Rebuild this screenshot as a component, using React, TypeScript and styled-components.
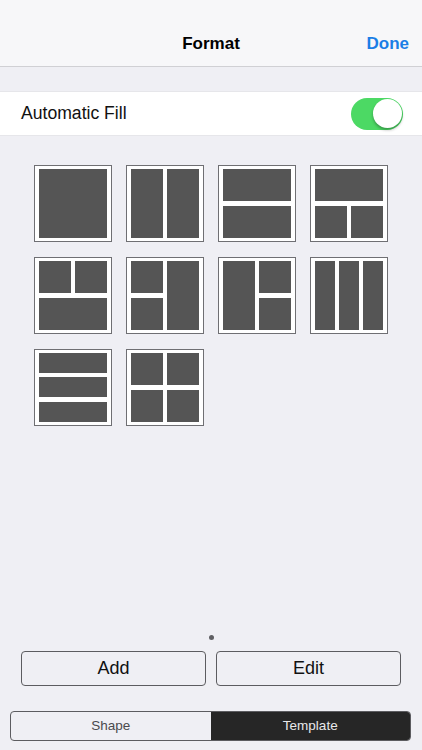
import React from "react";
import styled, { createGlobalStyle } from "styled-components";

const GlobalStyle = createGlobalStyle`
  html, body {
    margin: 0;
    padding: 0;
    background: #efeff4;
  }
  body {
    font-family: "Liberation Sans", Arial, sans-serif;
  }
`;

const Page = styled.div`
  display: flex;
  flex-direction: column;
  width: 422px;
  height: 750px;
  overflow: hidden;
  background: #efeff4;
`;

const NavBar = styled.header`
  display: flex;
  align-items: flex-end;
  justify-content: center;
  position: relative;
  box-sizing: border-box;
  height: 67px;
  padding-bottom: 12px;
  background: #f7f7f9;
  border-bottom: 1px solid #d0d0d4;
`;

const NavTitle = styled.h1`
  margin: 0;
  font-size: 17px;
  line-height: 20px;
  font-weight: 700;
  color: #000;
`;

const DoneLink = styled.a`
  position: absolute;
  right: 13px;
  bottom: 12px;
  font-size: 17px;
  line-height: 20px;
  font-weight: 700;
  color: #1a7ee6;
`;

const FillRow = styled.div`
  display: flex;
  align-items: center;
  justify-content: space-between;
  box-sizing: border-box;
  height: 45px;
  margin-top: 24px;
  padding: 0 19px 0 21px;
  background: #fff;
  border-top: 1px solid #e6e6ea;
  border-bottom: 1px solid #e6e6ea;
`;

const FillLabel = styled.span`
  font-size: 17.6px;
  color: #111;
`;

const Toggle = styled.div`
  position: relative;
  width: 52px;
  height: 32px;
  border-radius: 16px;
  background: #4cd964;
`;

const Knob = styled.div`
  position: absolute;
  top: 1.5px;
  right: 1.5px;
  width: 29px;
  height: 29px;
  border-radius: 50%;
  background: #fff;
  box-shadow: 0 2px 3px rgba(0, 0, 0, 0.3);
`;

const TemplateGrid = styled.div`
  display: grid;
  grid-template-columns: repeat(4, 78px);
  grid-auto-rows: 77px;
  column-gap: 14px;
  row-gap: 15px;
  padding: 29px 0 0 34px;
`;

const Tile = styled.div<{ $areas: string; $cols: number; $rows: number }>`
  display: grid;
  box-sizing: border-box;
  grid-template-areas: ${(p) => p.$areas};
  grid-template-columns: repeat(${(p) => p.$cols}, 1fr);
  grid-template-rows: repeat(${(p) => p.$rows}, 1fr);
  gap: 4.5px;
  padding: 3px 4px 3.5px;
  background: #fff;
  border: 1px solid #6f6f73;
`;

const Cell = styled.div<{ $area: string }>`
  grid-area: ${(p) => p.$area};
  background: #555;
`;

const BottomArea = styled.div`
  display: flex;
  flex-direction: column;
  margin-top: auto;
  padding-bottom: 9.5px;
`;

const PageDot = styled.div`
  align-self: center;
  width: 5px;
  height: 5px;
  margin-bottom: 11.5px;
  border-radius: 50%;
  background: #5f5f63;
`;

const ButtonRow = styled.div`
  display: flex;
  gap: 10px;
  padding: 0 21px;
`;

const ActionButton = styled.button`
  flex: 1;
  box-sizing: border-box;
  height: 34.5px;
  padding: 0;
  font-family: inherit;
  font-size: 18px;
  color: #111;
  background: transparent;
  border: 1px solid #5c5c60;
  border-radius: 4px;
`;

const Segmented = styled.div`
  display: flex;
  box-sizing: border-box;
  height: 29.5px;
  margin: 25.5px 11px 0 10px;
  overflow: hidden;
  border: 1px solid #5c5c60;
  border-radius: 4px;
`;

const Segment = styled.div<{ $active?: boolean }>`
  flex: 1;
  display: flex;
  align-items: center;
  justify-content: center;
  font-size: 13.5px;
  color: ${(p) => (p.$active ? "#e8e8ea" : "#4a4a4d")};
  background: ${(p) => (p.$active ? "#262626" : "transparent")};
`;

const templates = [
  { areas: `"a"`, cols: 1, rows: 1 },
  { areas: `"a b"`, cols: 2, rows: 1 },
  { areas: `"a" "b"`, cols: 1, rows: 2 },
  { areas: `"a a" "b c"`, cols: 2, rows: 2 },
  { areas: `"a b" "c c"`, cols: 2, rows: 2 },
  { areas: `"a c" "b c"`, cols: 2, rows: 2 },
  { areas: `"a b" "a c"`, cols: 2, rows: 2 },
  { areas: `"a b c"`, cols: 3, rows: 1 },
  { areas: `"a" "b" "c"`, cols: 1, rows: 3 },
  { areas: `"a b" "c d"`, cols: 2, rows: 2 },
];

function cellNames(areas: string) {
  return Array.from(new Set(areas.replace(/[^a-z]/g, "").split("")));
}

export default function App() {
  return (
    <Page>
      <GlobalStyle />
      <NavBar>
        <NavTitle>Format</NavTitle>
        <DoneLink>Done</DoneLink>
      </NavBar>
      <FillRow>
        <FillLabel>Automatic Fill</FillLabel>
        <Toggle>
          <Knob />
        </Toggle>
      </FillRow>
      <TemplateGrid>
        {templates.map((t, index) => (
          <Tile key={index} $areas={t.areas} $cols={t.cols} $rows={t.rows}>
            {cellNames(t.areas).map((name) => (
              <Cell key={name} $area={name} />
            ))}
          </Tile>
        ))}
      </TemplateGrid>
      <BottomArea>
        <PageDot />
        <ButtonRow>
          <ActionButton>Add</ActionButton>
          <ActionButton>Edit</ActionButton>
        </ButtonRow>
        <Segmented>
          <Segment>Shape</Segment>
          <Segment $active>Template</Segment>
        </Segmented>
      </BottomArea>
    </Page>
  );
}
